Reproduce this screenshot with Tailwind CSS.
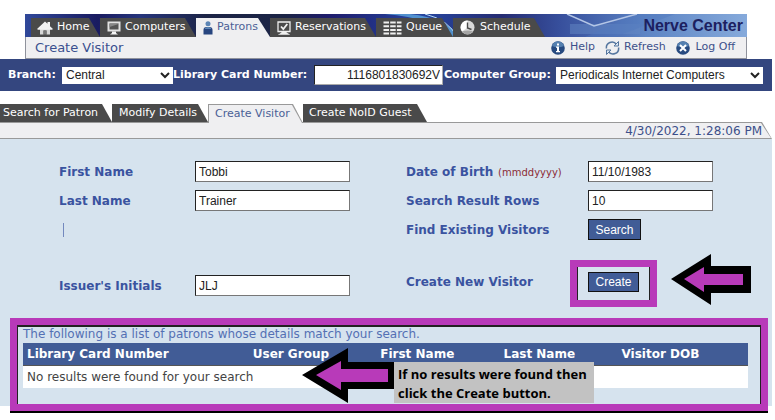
<!doctype html>
<html lang="en">
  <head>
    <meta charset="UTF-8" />
    <meta name="viewport" content="width=device-width, initial-scale=1" />
    <title>Create Visitor</title>
    <script src="https://cdn.jsdelivr.net/npm/@tailwindcss/browser@4"></script>
  </head>

  <body class="min-h-screen bg-white pt-[14px] pr-[3px] font-['DejaVu_Sans',sans-serif] text-[11px] text-[#3d4f8a]">
    <header class="mr-[25px] ml-[25px]">
      <div class="relative h-[23px] overflow-hidden bg-[#2c3f88]">
        <!-- banner artwork -->
        <svg class="absolute inset-0 h-full w-full" viewBox="0 0 722 23" preserveAspectRatio="none">
          <defs>
            <linearGradient id="banner">
              <stop offset="0" stop-color="#30489a" />
              <stop offset="0.1" stop-color="#191b60" />
              <stop offset="0.16" stop-color="#26357c" />
              <stop offset="0.25" stop-color="#1c2446" />
              <stop offset="0.36" stop-color="#1b2445" />
              <stop offset="0.42" stop-color="#1e1c6c" />
              <stop offset="0.55" stop-color="#2746a0" />
              <stop offset="0.66" stop-color="#252c72" />
              <stop offset="0.74" stop-color="#374f9c" />
              <stop offset="0.86" stop-color="#5c84c4" />
              <stop offset="1" stop-color="#86aadb" />
            </linearGradient>
          </defs>
          <rect width="722" height="23" fill="url(#banner)" />
          <path d="M360 0 Q410 4 424 23 L434 23 Q422 4 385 0Z" fill="#5da5dc" opacity="0.8" />
          <path d="M400 0 Q424 6 432 23" fill="none" stroke="#b7dcf5" stroke-width="1" />
          <path d="M545 10h70v10h-70z" fill="#6488c4" opacity="0.5" />
          <path d="M610 0h40l-60 23h-30z" fill="#4f78bf" opacity="0.4" />
          <path d="M542 0 569 12 612 0" fill="none" stroke="#b4c6e6" stroke-width="1.5" />
        </svg>
        <nav class="relative flex h-full items-end pl-[6px] text-white">
          <a href="#" class="flex h-[19px] w-[69px] items-center gap-1 bg-[#4a4a4a] pl-[6px] [clip-path:polygon(0_0,calc(100%-11px)_0,100%_100%,0_100%)]">
            <svg class="h-[14px] w-4" viewBox="0 0 16 14">
              <path d="M3 7h10v6.500H9.500V9.500h-3v4H3z" fill="#d6d6d6" />
              <path d="M0 8 8 0.500l2.500 2.300V1H13v4.200L16 8l-1 .8H1z" fill="#f2f2f2" />
              <path d="M6.500 9.500h3v4h-3z" fill="#777" />
            </svg>
            Home
          </a>
          <a href="#" class="flex h-[19px] w-[96px] items-center gap-1 bg-[#4a4a4a] pl-[7px] [clip-path:polygon(0_0,calc(100%-11px)_0,100%_100%,0_100%)]">
            <svg class="h-[14px] w-[14px]" viewBox="0 0 14 14">
              <path d="M0.500 0.500h13v10h-13z" fill="#e2e2e2" />
              <path d="M2.500 2.500h9v6h-9z" fill="#555" />
              <path d="M2.500 6 11.500 3v-.5h-9z" fill="#888" />
              <path d="M5 10.500h4v1.500l2 1.500H3L5 12z" fill="#f5f5f5" />
            </svg>
            Computers
          </a>
          <a href="#" class="flex h-[19px] w-[74px] items-center gap-1 bg-[#efeff1] pl-[7px] text-[#4b5f96] [clip-path:polygon(0_0,calc(100%-12px)_0,100%_100%,0_100%)]">
            <svg class="h-[14px] w-[10px]" viewBox="0 0 10 14">
              <circle cx="5" cy="2.800" r="2.500" fill="#5c85b5" />
              <path d="M0.500 13.500V9Q0.500 6 3.500 6h3Q9.500 6 9.500 9v4.500z" fill="#27457f" />
              <path d="M1.500 8Q2 6 5 6t3.500 2z" fill="#5c85b5" />
            </svg>
            Patrons
          </a>
          <a href="#" class="flex h-[19px] w-[106px] items-center gap-1 bg-[#4a4a4a] pl-[7px] [clip-path:polygon(0_0,calc(100%-11px)_0,100%_100%,0_100%)]">
            <svg class="h-[14px] w-[14px]" viewBox="0 0 14 14" fill="none" stroke="#efefef" stroke-width="1.300">
              <path d="M1 1h12v9.500H1zM7 10.500V12M3 13.200 5 12h4l2 1.200z" />
              <path d="M4 5.500 6.300 8 10.300 3" stroke-width="1.800" />
            </svg>
            Reservations
          </a>
          <a href="#" class="flex h-[19px] w-[77px] items-center gap-1 bg-[#4a4a4a] pl-[7px] [clip-path:polygon(0_0,calc(100%-11px)_0,100%_100%,0_100%)]">
            <svg class="h-[14px] w-[19px]" viewBox="0 0 19 14" stroke="#efefef" stroke-width="2" stroke-dasharray="5.500 1.200">
              <path d="M0.500 1.500h18M0.500 5.200h18M0.500 8.900h18M0.500 12.600h18" />
            </svg>
            Queue
          </a>
          <a href="#" class="flex h-[19px] w-[92px] items-center gap-[5px] bg-[#4a4a4a] pl-[7px] [clip-path:polygon(0_0,calc(100%-11px)_0,100%_100%,0_100%)]">
            <svg class="h-[15px] w-[15px]" viewBox="0 0 15 15">
              <circle cx="7.500" cy="7.500" r="7" fill="#d9d9d9" />
              <path d="M7.500 7.500V0.500A7 7 0 0 0 2 11.500z" fill="#fff" />
              <path d="M2 11.500 A7 7 0 0 0 13 11.500Q8 9.500 2 11.500z" fill="#a5a5a5" />
              <path d="M7.500 2.500v5.500l4 1.500" fill="none" stroke="#4a4a4a" stroke-width="1.400" />
            </svg>
            Schedule
          </a>
          <span class="mr-1 ml-auto self-center font-['Liberation_Sans',sans-serif] text-base leading-[23px] font-bold whitespace-nowrap text-[#1c2060]">Nerve Center</span>
        </nav>
      </div>
      <div class="flex h-[22px] items-center border-x border-b border-[#8f929c] bg-[#efeff1] pr-[11px] pl-[9px]">
        <h1 class="text-[13px] text-[#3a4f8f]">Create Visitor</h1>
        <div class="ml-auto flex items-center gap-[10px]">
          <a href="#" class="flex items-center gap-[5px]">
            <svg class="h-[14px] w-[14px]" viewBox="0 0 14 14">
              <circle cx="7" cy="7" r="6.800" fill="#274a80" />
              <path d="M1 5a6.300 6.300 0 0 1 12 0Q7 7.500 1 5z" fill="#5580b0" />
              <path d="M6 2.500h2v2H6zM5 5.500h3v4.500h1v1.200H5V10h1V6.700H5z" fill="#fff" />
            </svg>
            Help
          </a>
          <a href="#" class="flex items-center gap-1">
            <svg class="h-[14px] w-[15px]" viewBox="0 0 15 14" fill="none" stroke="#55769f" stroke-width="1.500">
              <path d="M1.500 7.500A5.500 5.500 0 0 1 11.500 3.500M13.500 6.500A5.500 5.500 0 0 1 3.500 10.500" />
              <path d="M13.500 0.500V5H9zM1.500 13.500V9H6z" fill="#dbe6f1" stroke-width="1" />
            </svg>
            Refresh
          </a>
          <a href="#" class="flex items-center gap-[6px]">
            <svg class="h-[14px] w-[14px]" viewBox="0 0 14 14">
              <circle cx="7" cy="7" r="6.800" fill="#274a80" />
              <path d="M1 5a6.300 6.300 0 0 1 12 0Q7 7.500 1 5z" fill="#5580b0" />
              <path d="m4 4 6 6m0-6-6 6" stroke="#fff" stroke-width="2" />
            </svg>
            Log Off
          </a>
        </div>
      </div>
    </header>

    <form class="flex h-8 items-center bg-[#34467f] pr-[9px] pl-2 font-bold whitespace-nowrap text-white">
      <label for="branch" class="w-[54px] shrink-0">Branch:</label>
      <select id="branch" class="h-[17px] w-[111px] shrink-0 bg-white font-['Liberation_Sans',sans-serif] text-xs leading-4 font-normal text-[#222]">
        <option>Central</option>
      </select>
      <label for="card" class="w-[141px] shrink-0">Library Card Number:</label>
      <input id="card" type="text" value="1116801830692V" class="h-5 w-[129px] shrink-0 border border-t-[#222] border-r-[#aaa] border-b-[#aaa] border-l-[#222] bg-white pr-0.5 text-right font-['Liberation_Sans',sans-serif] text-xs font-normal text-[#222]" />
      <label for="group" class="w-[113px] shrink-0 pl-px">Computer Group:</label>
      <select id="group" class="h-[17px] min-w-0 flex-1 bg-white font-['Liberation_Sans',sans-serif] text-xs leading-4 font-normal text-[#222]">
        <option>Periodicals Internet Computers</option>
      </select>
    </form>

    <nav class="mt-[13px] flex h-[18px] items-stretch whitespace-nowrap text-white">
      <a href="#" class="flex w-[112px] items-center bg-[#4a4a4a] pl-[3px] [clip-path:polygon(0_0,calc(100%-10px)_0,100%_100%,0_100%)]">Search for Patron</a>
      <a href="#" class="flex w-[96px] items-center bg-[#4a4a4a] pl-[7px] [clip-path:polygon(0_0,calc(100%-10px)_0,100%_100%,0_100%)]">Modify Details</a>
      <a href="#" class="relative z-10 -mb-px flex w-[95px] bg-[#999] pt-px pr-px pl-px text-[#4b5f96] [clip-path:polygon(0_0,calc(100%-10px)_0,100%_100%,0_100%)]">
        <span class="flex w-full items-center bg-[#efeff1] pl-[6px] [clip-path:polygon(0_0,calc(100%-10px)_0,100%_100%,0_100%)]">Create Visitor</span>
      </a>
      <a href="#" class="flex w-[124px] items-center bg-[#4a4a4a] pl-[6px] [clip-path:polygon(0_0,calc(100%-10px)_0,100%_100%,0_100%)]">Create NoID Guest</a>
    </nav>
    <div class="bg-[#999] py-px pr-px [clip-path:polygon(0_0,calc(100%-10px)_0,100%_100%,0_100%)]">
      <div class="h-[15px] bg-[#efeff1] pr-[9px] text-right text-xs leading-[16px] [clip-path:polygon(0_0,calc(100%-10px)_0,100%_100%,0_100%)]">4/30/2022, 1:28:06 PM</div>
    </div>

    <main class="bg-[#d6e3ee] pt-[22px] pb-[18px]">
      <form class="ml-[59px] grid grid-cols-[136px_211px_182px_1fr] items-center gap-y-2 text-xs text-[#3a53a0]">
        <label for="first" class="font-bold">First Name</label>
        <input id="first" type="text" value="Tobbi" class="h-[21px] w-[155px] border border-t-[#222] border-r-[#777] border-b-[#777] border-l-[#222] bg-white px-[3px] font-['Liberation_Sans',sans-serif] text-[#222]" />
        <label for="dob" class="whitespace-nowrap"><b>Date of Birth</b> <small class="pl-px text-[10px] text-[#8b2c35]">(mmddyyyy)</small></label>
        <input id="dob" type="text" value="11/10/1983" class="h-[21px] w-[125px] border border-t-[#222] border-r-[#777] border-b-[#777] border-l-[#222] bg-white px-[3px] font-['Liberation_Sans',sans-serif] text-[#222]" />

        <label for="last" class="font-bold">Last Name</label>
        <input id="last" type="text" value="Trainer" class="h-[21px] w-[155px] border border-t-[#222] border-r-[#777] border-b-[#777] border-l-[#222] bg-white px-[3px] font-['Liberation_Sans',sans-serif] text-[#222]" />
        <label for="rows" class="font-bold">Search Result Rows</label>
        <input id="rows" type="text" value="10" class="h-[21px] w-[125px] border border-t-[#222] border-r-[#777] border-b-[#777] border-l-[#222] bg-white px-[3px] font-['Liberation_Sans',sans-serif] text-[#222]" />

        <span class="col-span-2 pl-1"><span class="block h-[14px] w-px bg-[#7389be]"></span></span>
        <span class="font-bold whitespace-nowrap">Find Existing Visitors</span>
        <div>
          <button type="button" class="block h-[21px] w-[53px] border border-[#111] bg-[#415c96] font-['Liberation_Sans',sans-serif] leading-4 text-white">Search</button>
        </div>

        <label for="issuer" class="mt-[27px] font-bold">Issuer's Initials</label>
        <input id="issuer" type="text" value="JLJ" class="mt-[27px] h-[21px] w-[155px] border border-t-[#222] border-r-[#777] border-b-[#777] border-l-[#222] bg-white px-[3px] font-['Liberation_Sans',sans-serif] text-[#222]" />
        <span class="mt-[20px] font-bold whitespace-nowrap">Create New Visitor</span>
        <div class="relative mt-[20px]">
          <button type="button" class="block h-5 w-[51px] border border-[#111] bg-[#415c96] font-['Liberation_Sans',sans-serif] leading-4 text-white">Create</button>
          <div class="absolute -top-3 -left-[18px] h-[47px] w-[87px] border-7 border-[#b83ab9]">
            <div class="h-full border-x border-[#222]"></div>
          </div>
          <svg class="absolute -top-[18px] left-[83px] h-[51px] w-[80px]" viewBox="0 0 80 51">
            <path d="M0 25 40 0v12h40v27H40v12z" fill="#000" />
            <path d="M13 25 33 13v7h39v11H33v7z" fill="#b83ab9" />
          </svg>
        </div>
      </form>

      <section class="relative mt-[30px] mr-6 ml-[23px]">
        <table class="w-full table-fixed text-left text-xs">
          <caption class="h-[17px] text-left leading-4 whitespace-nowrap text-[#5470b4]">The following is a list of patrons whose details match your search.</caption>
          <thead class="h-[22px] bg-[#415c96] text-white">
            <tr>
              <th class="w-[31%] pl-1">Library Card Number</th>
              <th class="w-[18%] pl-[5px]">User Group</th>
              <th class="w-[17%] pl-[2px]">First Name</th>
              <th class="w-[16%] pl-[2px]">Last Name</th>
              <th class="w-[18%] pl-[4px]">Visitor DOB</th>
            </tr>
          </thead>
          <tbody class="h-[23px] bg-white text-[#444]">
            <tr>
              <td colspan="5" class="border-t border-[#555] pl-1">No results were found for your search</td>
            </tr>
          </tbody>
        </table>
        <div class="absolute -top-2 -right-5 -bottom-[25px] -left-[13px] border-b-2 border-black">
          <div class="h-full border-7 border-[#b83ab9]">
            <div class="h-full border-x border-t-2 border-[#222]"></div>
          </div>
        </div>
        <div class="absolute top-[22px] left-[279px] flex items-start">
          <svg class="h-[55px] w-[92px]" viewBox="0 0 92 55">
            <path d="M0 27 46 0v14h46v27H46v14z" fill="#000" />
            <path d="M14 27 39 13v8h47v13H39v8z" fill="#b83ab9" />
          </svg>
          <p class="mt-[14px] h-[41px] w-[200px] bg-[#c2c2c2] pt-[3px] pl-1 font-['Open_Sans',sans-serif] text-[13px] leading-[19px] font-bold whitespace-nowrap text-black">
            If no results were found then<br />click the Create button.
          </p>
        </div>
      </section>
    </main>
  </body>
</html>
